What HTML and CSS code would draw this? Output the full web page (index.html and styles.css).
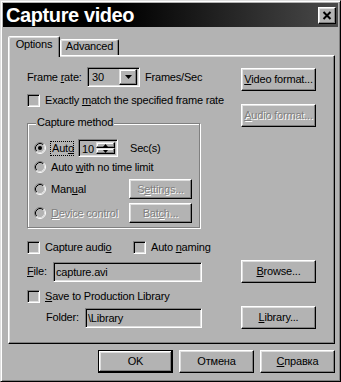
FILE: index.html
```html
<!DOCTYPE html>
<html>
<head>
<meta charset="utf-8">
<link rel="stylesheet" href="styles.css">
</head>
<body>
<div class="dialog">
  <div class="titlebar">
    <span class="title">Capture video</span>
    <div class="close">
      <svg width="10" height="9" viewBox="0 0 10 9"><path d="M1.5 1 L8.5 8 M8.5 1 L1.5 8" stroke="#000" stroke-width="2" fill="none"/></svg>
    </div>
  </div>
  <div class="tabs">
    <div class="tab active">Options</div>
    <div class="tab inactive">Advanced</div>
  </div>
  <div class="panel">
    <div class="top">
      <div class="left">
        <div class="frame-row">
          <span class="frame-lbl">Frame <u>r</u>ate:</span>
          <div class="combo sunken">
            <span class="combo-val">30</span>
            <div class="drop raised">
              <svg width="7" height="4" viewBox="0 0 7 4"><path d="M0 0 H7 L3.5 4 Z" fill="#000"/></svg>
            </div>
          </div>
          <span class="frames">Frames/Sec</span>
        </div>
        <div class="check-row exact">
          <span class="cb"></span><span>Exactly <u>m</u>atch the specified frame rate</span>
        </div>
        <div class="group">
          <span class="group-title">Capture method</span>
          <div class="rrow r1">
            <svg class="radio" width="12" height="12" viewBox="0 0 12 12"><circle cx="6" cy="6" r="4" fill="#b3b3b3"/><path d="M2.11 9.89 A5.5 5.5 0 0 1 9.89 2.11" stroke="#808080" fill="none"/><path d="M9.89 2.11 A5.5 5.5 0 0 1 2.11 9.89" stroke="#fff" fill="none"/><path d="M2.82 9.18 A4.5 4.5 0 0 1 9.18 2.82" stroke="#000" fill="none"/><path d="M9.18 2.82 A4.5 4.5 0 0 1 2.82 9.18" stroke="#dfdfdf" fill="none"/><circle cx="6" cy="6" r="2" fill="#000"/></svg>
            <span class="focus">Aut<u>o</u></span>
            <div class="spin sunken">
              <span class="spin-val">10</span>
              <div class="spin-btns">
                <div class="sbtn raised"><svg width="5" height="3" viewBox="0 0 5 3"><path d="M0 3 H5 L2.5 0 Z" fill="#000"/></svg></div>
                <div class="sbtn raised"><svg width="5" height="3" viewBox="0 0 5 3"><path d="M0 0 H5 L2.5 3 Z" fill="#000"/></svg></div>
              </div>
            </div>
            <span class="secs">Sec(s)</span>
          </div>
          <div class="rrow r2">
            <svg class="radio" width="12" height="12" viewBox="0 0 12 12"><circle cx="6" cy="6" r="4" fill="#b3b3b3"/><path d="M2.11 9.89 A5.5 5.5 0 0 1 9.89 2.11" stroke="#808080" fill="none"/><path d="M9.89 2.11 A5.5 5.5 0 0 1 2.11 9.89" stroke="#fff" fill="none"/><path d="M2.82 9.18 A4.5 4.5 0 0 1 9.18 2.82" stroke="#000" fill="none"/><path d="M9.18 2.82 A4.5 4.5 0 0 1 2.82 9.18" stroke="#dfdfdf" fill="none"/></svg>
            <span class="rlbl">Auto <u>w</u>ith no time limit</span>
          </div>
          <div class="rrow r3">
            <svg class="radio" width="12" height="12" viewBox="0 0 12 12"><circle cx="6" cy="6" r="4" fill="#b3b3b3"/><path d="M2.11 9.89 A5.5 5.5 0 0 1 9.89 2.11" stroke="#808080" fill="none"/><path d="M9.89 2.11 A5.5 5.5 0 0 1 2.11 9.89" stroke="#fff" fill="none"/><path d="M2.82 9.18 A4.5 4.5 0 0 1 9.18 2.82" stroke="#000" fill="none"/><path d="M9.18 2.82 A4.5 4.5 0 0 1 2.82 9.18" stroke="#dfdfdf" fill="none"/></svg>
            <span class="rlbl">Man<u>u</u>al</span>
            <div class="btn small disabled">S<u>e</u>ttings...</div>
          </div>
          <div class="rrow r4">
            <svg class="radio" width="12" height="12" viewBox="0 0 12 12"><circle cx="6" cy="6" r="4" fill="#b3b3b3"/><path d="M2.11 9.89 A5.5 5.5 0 0 1 9.89 2.11" stroke="#808080" fill="none"/><path d="M9.89 2.11 A5.5 5.5 0 0 1 2.11 9.89" stroke="#fff" fill="none"/><path d="M2.82 9.18 A4.5 4.5 0 0 1 9.18 2.82" stroke="#000" fill="none"/><path d="M9.18 2.82 A4.5 4.5 0 0 1 2.82 9.18" stroke="#dfdfdf" fill="none"/></svg>
            <span class="rlbl disabled"><u>D</u>evice control</span>
            <div class="btn small disabled">Bat<u>c</u>h...</div>
          </div>
        </div>
      </div>
      <div class="right">
        <div class="btn"><u>V</u>ideo format...</div>
        <div class="btn disabled"><u>A</u>udio format...</div>
      </div>
    </div>
    <div class="check-row audio-row">
      <div class="item1"><span class="cb"></span><span>Capture audi<u>o</u></span></div>
      <span class="cb"></span><span>Auto <u>n</u>aming</span>
    </div>
    <div class="field-row file-row">
      <div class="left-part">
        <span class="file-lbl"><u>F</u>ile:</span>
        <div class="field sunken file-field">capture.avi</div>
      </div>
      <div class="btn"><u>B</u>rowse...</div>
    </div>
    <div class="check-row save-row">
      <span class="cb"></span><span><u>S</u>ave to Production Library</span>
    </div>
    <div class="field-row folder-row">
      <div class="left-part">
        <span class="folder-lbl">Folder:</span>
        <div class="field sunken folder-field">\Library</div>
      </div>
      <div class="btn"><u>L</u>ibrary...</div>
    </div>
  </div>
  <div class="footer">
    <div class="btn default">OK</div>
    <div class="btn">Отмена</div>
    <div class="btn"><u>С</u>правка</div>
  </div>
</div>
</body>
</html>
```

FILE: styles.css
```css
html, body {
  margin: 0;
  padding: 0;
  background: #b3b3b3;
}
body {
  font-family: "Liberation Sans", Arial, sans-serif;
  font-size: 11px;
  line-height: 13px;
  letter-spacing: -0.2px;
  color: #000;
}
u {
  text-decoration: underline;
  text-underline-offset: 1px;
}
.dialog {
  box-sizing: border-box;
  width: 341px;
  height: 382px;
  border: 1px solid;
  border-color: #dfdfdf #000 #000 #dfdfdf;
  box-shadow: inset 1px 1px #fff, inset -1px -1px #808080;
  padding: 2px;
  background: #b3b3b3;
}
.titlebar {
  height: 24px;
  display: flex;
  align-items: center;
  justify-content: space-between;
  padding: 0 2px 0 3px;
  background: linear-gradient(90deg, #000 0%, #000 35%, #4a4a4a 100%);
}
.title {
  color: #fff;
  font-weight: bold;
  font-size: 20px;
  letter-spacing: -0.4px;
  line-height: 24px;
}
.close {
  box-sizing: border-box;
  width: 18px;
  height: 17px;
  display: flex;
  align-items: center;
  justify-content: center;
  background: #b3b3b3;
  border: 1px solid;
  border-color: #fff #000 #000 #fff;
  box-shadow: inset -1px -1px #808080, inset 1px 1px #dfdfdf;
}
.raised {
  box-sizing: border-box;
  background: #b3b3b3;
  border: 1px solid;
  border-color: #dfdfdf #000 #000 #dfdfdf;
  box-shadow: inset -1px -1px #808080, inset 1px 1px #fff;
}
.sunken {
  box-sizing: border-box;
  background: #b3b3b3;
  border: 1px solid;
  border-color: #808080 #fff #fff #808080;
  box-shadow: inset 1px 1px #000, inset -1px -1px #dfdfdf;
}
.tabs {
  display: flex;
  align-items: flex-end;
  height: 19px;
  margin: 9px 0 0 5px;
}
.tab {
  box-sizing: border-box;
  border: 1px solid;
  border-bottom: 0;
  border-color: #fff #000 transparent #fff;
  box-shadow: inset -1px 0 #808080, inset 1px 1px #dfdfdf;
  border-radius: 2px 2px 0 0;
  background: #b3b3b3;
  text-align: center;
}
.tab.active {
  width: 52px;
  height: 21px;
  margin-bottom: -2px;
  padding-top: 1px;
  position: relative;
  z-index: 1;
}
.tab.inactive {
  width: 59px;
  height: 16px;
}
.panel {
  box-sizing: border-box;
  width: 327px;
  height: 289px;
  margin-left: 5px;
  border: 1px solid;
  border-color: #fff #000 #000 #fff;
  box-shadow: inset -1px -1px #808080, inset 1px 1px #dfdfdf;
  padding: 11px 0 0 18px;
}
.top {
  display: grid;
  grid-template-columns: 214px 75px;
}
.left {
  display: flex;
  flex-direction: column;
}
.frame-row {
  display: flex;
  align-items: center;
  height: 20px;
}
.frame-lbl {
  width: 60px;
}
.combo {
  width: 53px;
  height: 20px;
  display: flex;
  align-items: center;
  padding: 2px 2px 2px 2px;
}
.combo-val {
  flex: 1;
  padding-left: 2px;
}
.drop {
  width: 18px;
  height: 16px;
  display: flex;
  align-items: center;
  justify-content: center;
}
.frames {
  margin-left: 5px;
  white-space: nowrap;
}
.check-row {
  display: flex;
  align-items: center;
  height: 13px;
  white-space: nowrap;
}
.exact {
  margin-top: 7px;
}
.cb {
  box-sizing: border-box;
  flex: none;
  width: 13px;
  height: 13px;
  margin-right: 5px;
  border: 1px solid;
  border-color: #808080 #fff #fff #808080;
  box-shadow: inset 1px 1px #000, inset -1px -1px #dfdfdf;
}
.group {
  margin-top: 16px;
  box-sizing: border-box;
  width: 173px;
  height: 105px;
  border: 1px solid #808080;
  box-shadow: inset 1px 1px #fff, 1px 1px #fff;
  padding: 0 7px 0 6px;
}
.group-title {
  display: block;
  width: max-content;
  margin: -8px 0 0 2px;
  padding: 0 1px;
  background: #b3b3b3;
}
.rrow {
  display: flex;
  align-items: center;
  white-space: nowrap;
}
.radio {
  flex: none;
  display: block;
}
.rlbl {
  margin-left: 5px;
}
.r1 {
  margin-top: 10px;
  height: 18px;
}
.r2 {
  margin-top: 3px;
  height: 14px;
}
.r3 {
  margin-top: 5px;
  height: 20px;
}
.r4 {
  margin-top: 4px;
  height: 20px;
}
.focus {
  box-sizing: border-box;
  width: 24px;
  margin-left: 4px;
  padding-left: 1px;
  border: 1px dotted #000;
  line-height: 13px;
}
.spin {
  width: 40px;
  height: 18px;
  margin-left: 4px;
  display: flex;
  padding: 2px;
}
.spin-val {
  flex: 1;
  padding-left: 1px;
  line-height: 14px;
}
.spin-btns {
  width: 19px;
  display: flex;
  flex-direction: column;
}
.sbtn {
  flex: 1;
  display: flex;
  align-items: center;
  justify-content: center;
}
.secs {
  margin-left: 12px;
}
.btn {
  box-sizing: border-box;
  width: 75px;
  height: 23px;
  display: flex;
  align-items: center;
  justify-content: center;
  white-space: nowrap;
  background: #b3b3b3;
  border: 1px solid;
  border-color: #fff #000 #000 #fff;
  box-shadow: inset -1px -1px #808080, inset 1px 1px #dfdfdf;
}
.btn.small {
  width: 63px;
  height: 20px;
  margin-left: auto;
}
.btn.default {
  border-color: #000;
  box-shadow: inset -1px -1px #000, inset 1px 1px #fff, inset -2px -2px #808080, inset 2px 2px #dfdfdf;
}
.disabled {
  color: #808080;
  text-shadow: 1px 1px 0 #fff;
}
.right {
  display: flex;
  flex-direction: column;
  gap: 13px;
  padding-top: 1px;
}
.audio-row {
  margin-top: 13px;
}
.item1 {
  width: 106px;
  display: flex;
  align-items: center;
}
.field-row {
  display: flex;
  align-items: center;
  height: 23px;
}
.left-part {
  width: 214px;
  display: flex;
  align-items: center;
}
.file-row {
  margin-top: 6px;
}
.file-lbl {
  width: 26px;
}
.field {
  height: 20px;
  padding: 0 2px;
  line-height: 18px;
  white-space: nowrap;
}
.file-field {
  width: 149px;
}
.save-row {
  margin-top: 7px;
}
.folder-row {
  margin-top: 3px;
}
.folder-lbl {
  margin-left: 19px;
  width: 39px;
}
.folder-field {
  width: 117px;
}
.footer {
  display: flex;
  justify-content: flex-end;
  gap: 6px;
  margin-top: 6px;
  padding-right: 3px;
}
```
